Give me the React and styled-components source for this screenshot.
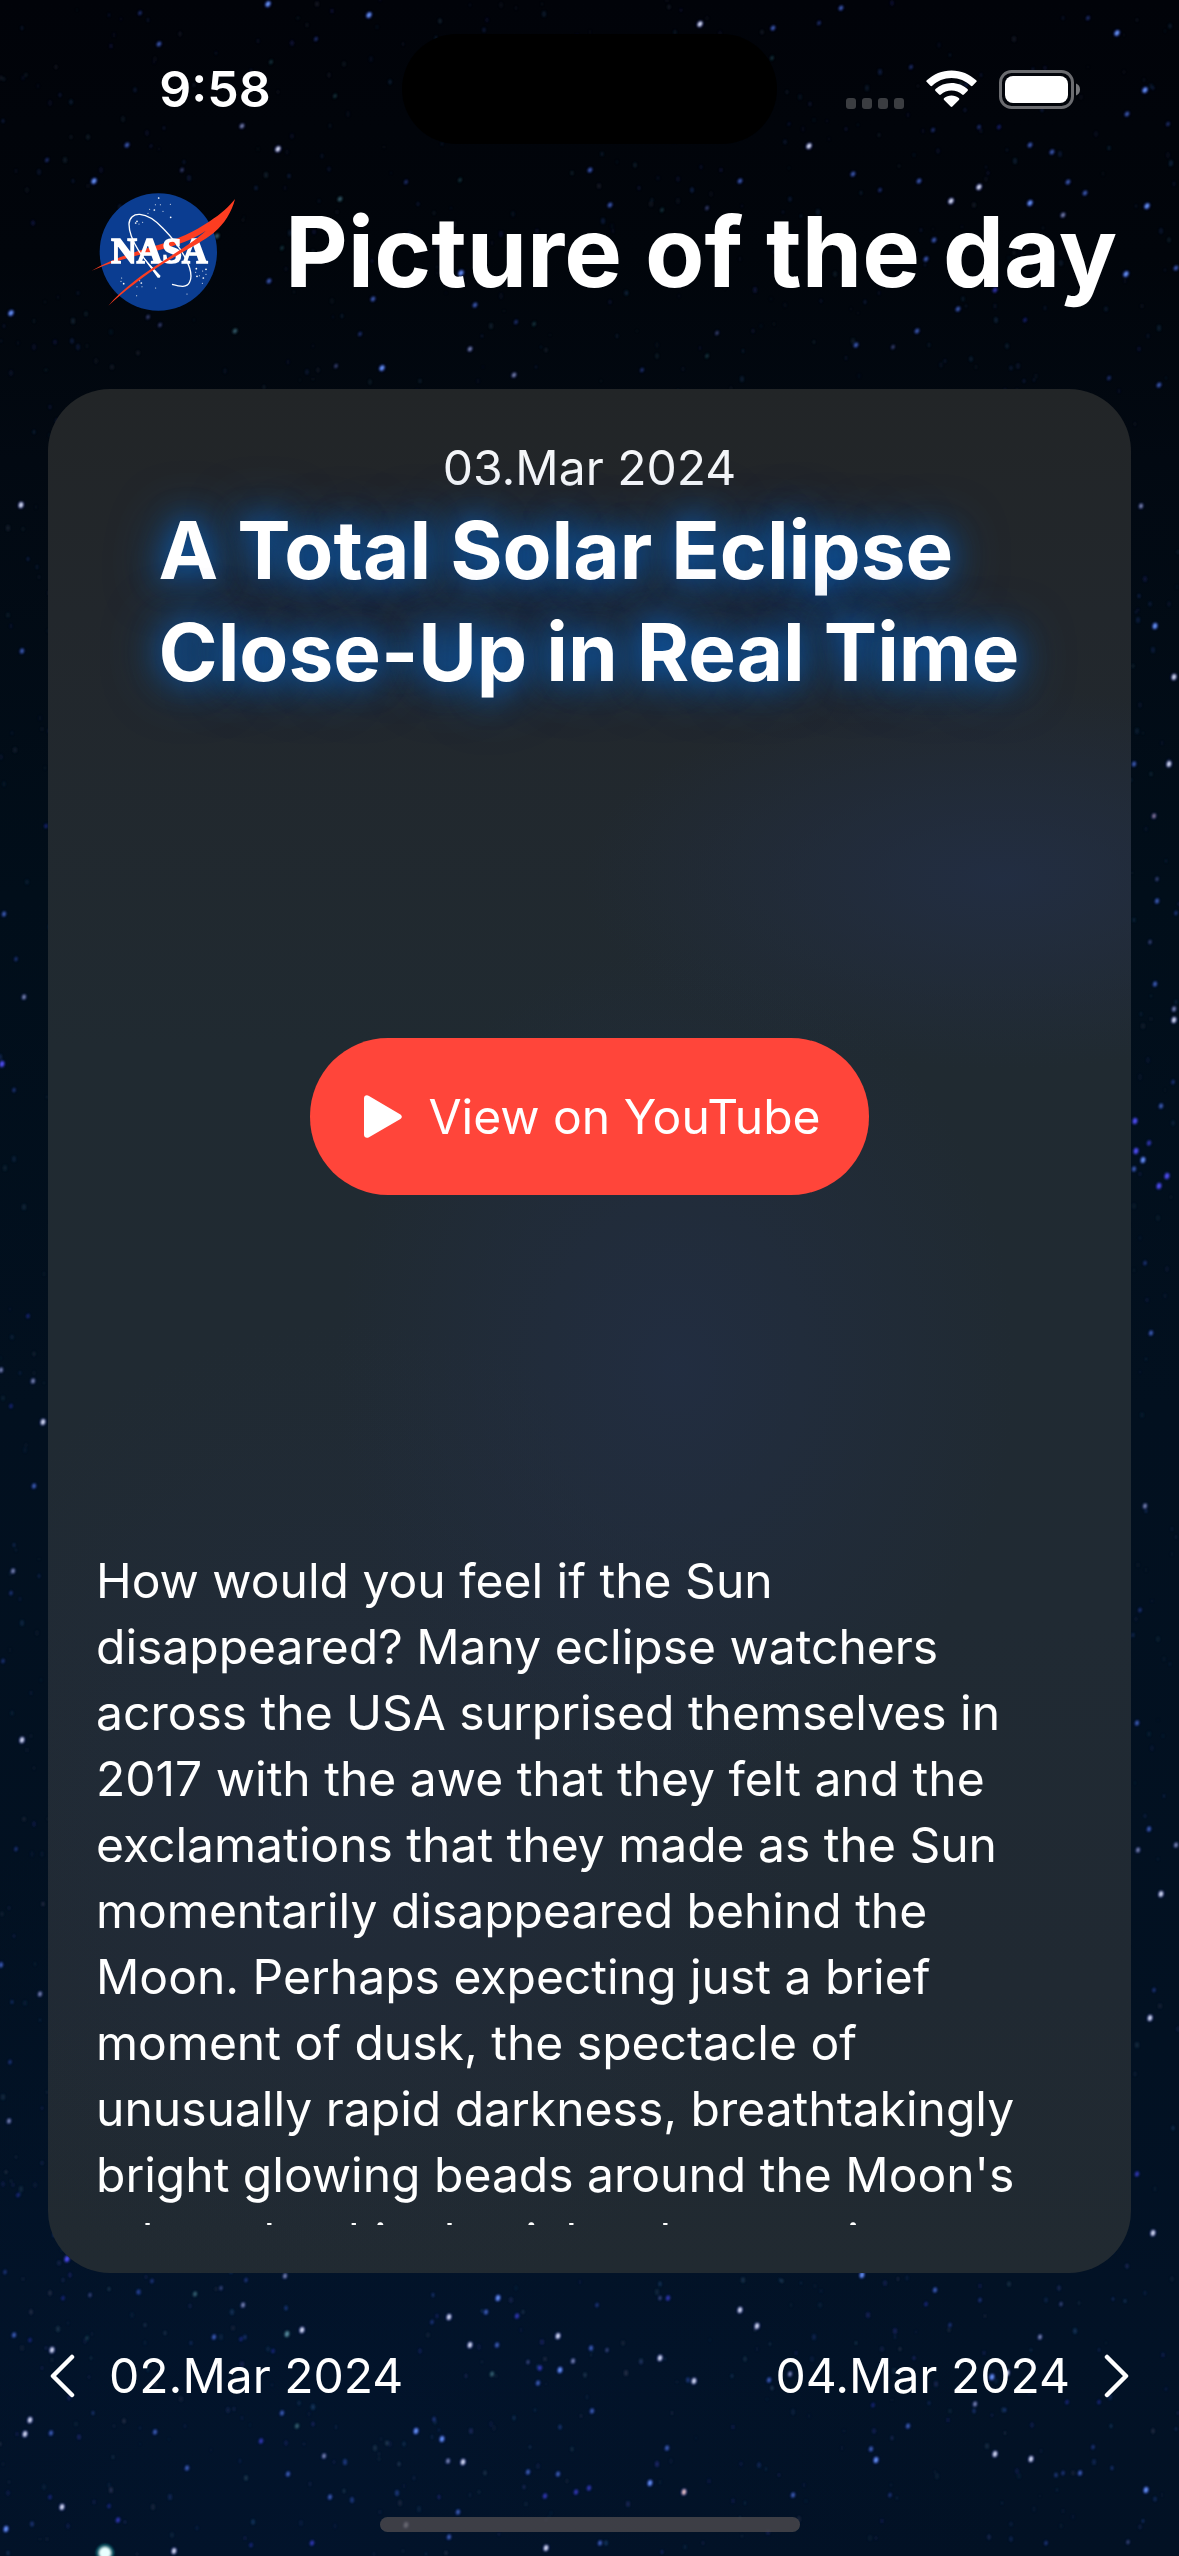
import React from "react";
import styled, { createGlobalStyle } from "styled-components";

const GlobalStyle = createGlobalStyle`
  * { box-sizing: border-box; }
  html, body { margin: 0; padding: 0; background: #020a14; }
  body, button { font-family: Inter, "Liberation Sans", sans-serif; color: #fff; }
`;

const Page = styled.div`
  position: relative;
  isolation: isolate;
  display: flex;
  flex-direction: column;
  min-height: 100vh;
  overflow: hidden;
  background:
    radial-gradient(ellipse 60% 30% at 25% 100%, rgba(2, 24, 56, 0.35), transparent),
    linear-gradient(180deg, #010309 0%, #01050b 10%, #020912 18%, #010e1a 35%, #02101f 55%, #021122 80%, #021226 92%, #021124 100%);
`;

const Sky = styled.svg`
  position: absolute;
  inset: 0;
  z-index: -1;
  width: 100%;
  height: 100%;
`;

const StatusBar = styled.div`
  display: grid;
  grid-template-columns: 1fr 375px 1fr;
  align-items: center;
  height: 178px;
`;

const Clock = styled.time`
  padding-left: 28px;
  text-align: center;
  font-size: 50px;
  line-height: 60px;
  font-weight: 600;
`;

const Island = styled.div`
  height: 110px;
  border-radius: 55px;
  background: #000;
`;

const Indicators = styled.div`
  display: flex;
  align-items: center;
  justify-content: center;
  gap: 22px;
  padding-right: 30px;
`;

const Dots = styled.svg`
  margin-top: 28px;
`;

const Header = styled.header`
  display: flex;
  align-items: center;
  gap: 48px;
  height: 148px;
  padding-left: 91px;
`;

const PageTitle = styled.h1`
  margin: 0;
  font-size: 97px;
  line-height: 120px;
  font-weight: 700;
  white-space: nowrap;
`;

const Card = styled.main`
  flex: 1;
  display: flex;
  flex-direction: column;
  margin: 63px 48px 0;
  padding: 48px;
  border-radius: 62px;
  background:
    radial-gradient(ellipse 420px 190px at 88% 26%, rgba(34, 46, 68, 0.9), transparent),
    radial-gradient(ellipse 340px 420px at 58% 52%, rgba(34, 46, 68, 0.8), transparent),
    radial-gradient(ellipse 460px 500px at 28% 76%, rgba(34, 44, 60, 0.7), transparent),
    linear-gradient(180deg, #222527 0%, #22272c 12%, #202a31 35%, #202a33 65%, #202932 85%, #212a31 100%);
`;

const EntryDate = styled.time`
  text-align: center;
  font-size: 48px;
  line-height: 62px;
  color: #f4f6f8;
`;

const EntryTitle = styled.h2`
  align-self: center;
  max-width: 862px;
  margin: 0;
  font-size: 80px;
  line-height: 102px;
  font-weight: 700;
  text-shadow: 0 0 30px #0a5cb4, 0 0 56px rgba(10, 92, 180, 0.9);
`;

const Media = styled.section`
  flex: 1;
  display: flex;
  align-items: center;
  justify-content: center;
  margin-bottom: 18px;
`;

const VideoButton = styled.button`
  display: flex;
  align-items: center;
  gap: 26px;
  height: 157px;
  padding: 0 48px 0 54px;
  border: 0;
  border-radius: 78px;
  background: #ff453a;
  font-size: 48px;
  line-height: 62px;
`;

const Explanation = styled.p`
  height: 677px;
  margin: 0;
  overflow: hidden;
  font-size: 48px;
  line-height: 66px;
`;

const DayNav = styled.nav`
  display: flex;
  align-items: center;
  justify-content: space-between;
  height: 206px;
  padding: 0 50px;
`;

const DayButton = styled.button`
  display: flex;
  align-items: center;
  gap: 34px;
  padding: 0;
  border: 0;
  background: none;
  font-size: 48px;
  line-height: 66px;
`;

const HomeArea = styled.div`
  display: flex;
  align-items: flex-end;
  justify-content: center;
  height: 77px;
  padding-bottom: 24px;
`;

const HomeBar = styled.div`
  width: 420px;
  height: 15px;
  border-radius: 8px;
  background: rgba(76, 74, 78, 0.8);
`;

/* x, y, brightness 1-4, tint */
const BRIGHT_STARS = [
  [268, 4, 4, "b"], [369, 15, 4, "b"], [140, 13, 2, "b"], [159, 44, 3, "b"], [298, 18, 1, "t"], [316, 39, 2, "b"],
  [335, 96, 2, "t"], [271, 62, 2, "t"], [242, 126, 3, "w"], [278, 149, 4, "w"], [127, 145, 3, "b"], [151, 146, 1, "w"],
  [94, 181, 4, "b"], [47, 160, 2, "b"], [182, 170, 2, "w"], [11, 313, 4, "b"], [235, 331, 3, "t"], [269, 281, 3, "b"],
  [373, 299, 3, "b"], [475, 305, 3, "b"], [461, 273, 4, "b"], [340, 199, 3, "t"], [406, 182, 2, "b"], [460, 180, 2, "t"],
  [590, 170, 3, "b"], [470, 349, 3, "w"], [382, 368, 4, "b"], [514, 375, 3, "w"], [336, 366, 2, "w"], [360, 334, 2, "b"],
  [534, 324, 2, "t"], [516, 322, 2, "b"], [148, 317, 2, "w"], [160, 325, 2, "w"], [46, 370, 1, "t"], [217, 236, 3, "t"],
  [282, 248, 2, "t"], [700, 24, 4, "w"], [773, 28, 3, "b"], [841, 8, 3, "b"], [819, 23, 2, "b"], [772, 58, 2, "t"],
  [1088, 18, 2, "b"], [1117, 33, 4, "b"], [1145, 90, 4, "b"], [1127, 114, 3, "b"], [1168, 124, 2, "b"], [911, 67, 2, "b"],
  [809, 146, 4, "w"], [789, 124, 1, "b"], [933, 130, 2, "b"], [979, 127, 2, "b"], [999, 127, 2, "v"], [1030, 145, 3, "b"],
  [1052, 152, 3, "b"], [853, 174, 3, "b"], [919, 181, 3, "b"], [979, 187, 4, "w"], [951, 201, 4, "w"], [1030, 203, 4, "b"],
  [1068, 182, 3, "b"], [1085, 193, 3, "b"], [1063, 215, 3, "w"], [1147, 206, 4, "b"], [1126, 274, 4, "b"], [1176, 268, 3, "b"],
  [740, 181, 3, "b"], [610, 205, 3, "b"], [662, 210, 2, "t"], [707, 208, 2, "w"], [880, 190, 2, "b"], [934, 240, 3, "b"],
  [926, 259, 3, "b"], [995, 290, 3, "v"], [958, 309, 3, "b"], [1025, 320, 2, "v"], [917, 331, 3, "b"], [856, 345, 3, "b"],
  [893, 347, 2, "w"], [707, 356, 2, "t"], [642, 370, 2, "b"], [717, 333, 2, "w"], [1109, 378, 2, "b"],
  [21, 505, 4, "w"], [22, 651, 3, "b"], [46, 826, 2, "v"], [4, 914, 3, "b"], [16, 959, 2, "b"], [24, 997, 3, "w"],
  [2, 1064, 4, "v"], [14, 1090, 2, "b"], [28, 1316, 2, "v"], [1, 1370, 3, "w"], [33, 1381, 3, "w"], [11, 1406, 2, "v"],
  [43, 1422, 4, "w"], [34, 1486, 3, "b"], [13, 1571, 3, "w"], [11, 1593, 2, "b"], [3, 1661, 2, "b"], [22, 1740, 4, "w"],
  [40, 1994, 3, "w"], [9, 2121, 3, "w"], [18, 2195, 2, "v"], [1, 1965, 3, "b"], [16, 1849, 2, "b"], [10, 2062, 2, "b"],
  [1159, 385, 3, "b"], [1141, 506, 3, "w"], [1155, 626, 4, "b"], [1174, 677, 4, "w"], [1134, 764, 3, "b"], [1169, 764, 4, "w"],
  [1154, 816, 3, "r"], [1157, 879, 2, "w"], [1157, 901, 3, "b"], [1176, 913, 2, "b"], [1150, 942, 2, "w"], [1155, 984, 3, "b"],
  [1174, 1009, 3, "w"], [1174, 1020, 4, "w"], [1173, 1082, 2, "b"], [1161, 1106, 3, "b"], [1135, 1121, 4, "v"],
  [1149, 1143, 3, "v"], [1136, 1151, 4, "v"], [1143, 1160, 4, "b"], [1134, 1169, 3, "b"], [1167, 1176, 4, "v"],
  [1159, 1186, 4, "v"], [1145, 1263, 2, "b"], [1151, 1333, 3, "b"], [1145, 1506, 3, "w"], [1140, 1610, 2, "b"],
  [1137, 1723, 3, "b"], [1149, 1829, 3, "b"], [1138, 1850, 3, "w"], [1176, 1845, 3, "w"], [1161, 1894, 4, "w"],
  [1154, 1990, 2, "b"], [1150, 2018, 4, "w"], [1137, 2174, 3, "v"], [1153, 2233, 4, "w"],
  [67, 2259, 4, "v"], [5, 2272, 2, "b"], [285, 2276, 3, "w"], [152, 2281, 2, "b"], [195, 2294, 3, "t"], [221, 2288, 2, "w"],
  [138, 2292, 2, "b"], [246, 2280, 2, "b"], [243, 2305, 3, "w"], [90, 2295, 2, "w"], [63, 2298, 2, "v"], [14, 2335, 3, "b"],
  [30, 2340, 2, "v"], [52, 2350, 4, "w"], [87, 2338, 2, "t"], [214, 2337, 3, "b"], [241, 2339, 2, "v"], [287, 2334, 4, "t"],
  [302, 2330, 4, "w"], [273, 2351, 2, "v"], [470, 2345, 4, "w"], [449, 2317, 4, "w"], [498, 2298, 4, "b"], [486, 2312, 3, "b"],
  [432, 2322, 2, "b"], [517, 2316, 3, "v"], [558, 2336, 4, "w"], [597, 2305, 2, "b"], [660, 2298, 2, "w"], [668, 2298, 3, "v"],
  [740, 2310, 4, "w"], [757, 2326, 4, "w"], [660, 2358, 4, "w"], [694, 2381, 4, "w"], [591, 2348, 3, "b"], [607, 2350, 2, "w"],
  [573, 2361, 3, "w"], [560, 2370, 4, "b"], [540, 2368, 3, "v"], [528, 2362, 2, "w"], [538, 2383, 3, "b"], [492, 2374, 3, "t"],
  [497, 2345, 3, "b"], [862, 2275, 4, "b"], [935, 2290, 3, "b"], [926, 2304, 2, "v"], [950, 2325, 2, "b"], [1040, 2337, 3, "w"],
  [980, 2300, 2, "b"], [1061, 2304, 2, "w"], [769, 2380, 3, "b"], [592, 2411, 3, "b"], [282, 2413, 3, "b"],
  [30, 2420, 4, "w"], [25, 2434, 4, "w"], [51, 2433, 3, "b"], [155, 2432, 3, "b"], [261, 2441, 3, "v"], [297, 2426, 3, "t"],
  [416, 2431, 4, "b"], [442, 2439, 4, "b"], [448, 2461, 3, "w"], [463, 2462, 4, "w"], [434, 2419, 2, "b"], [324, 2456, 3, "w"],
  [187, 2468, 3, "b"], [288, 2474, 3, "b"], [528, 2472, 3, "b"], [558, 2474, 3, "b"], [667, 2448, 3, "b"], [650, 2483, 4, "b"],
  [684, 2492, 4, "r"], [589, 2488, 3, "v"], [576, 2492, 3, "v"], [545, 2496, 3, "v"], [330, 2497, 3, "b"], [50, 2497, 2, "v"],
  [62, 2507, 4, "w"], [109, 2506, 2, "v"], [118, 2520, 3, "v"], [6, 2529, 4, "b"], [458, 2512, 3, "b"], [406, 2525, 4, "w"],
  [449, 2537, 3, "b"], [546, 2548, 4, "w"], [600, 2543, 3, "b"], [174, 2551, 4, "w"], [312, 2543, 3, "v"], [251, 2545, 2, "v"],
  [908, 2426, 3, "b"], [871, 2449, 3, "b"], [876, 2460, 4, "b"], [995, 2454, 4, "w"], [1031, 2459, 4, "w"], [1093, 2447, 2, "b"],
  [1080, 2473, 3, "b"], [1063, 2473, 2, "b"], [1146, 2490, 4, "b"], [793, 2495, 3, "b"], [890, 2495, 2, "b"], [1128, 2542, 2, "w"],
  [1046, 2543, 2, "b"], [975, 2404, 3, "w"], [1007, 2373, 4, "w"], [992, 2377, 4, "b"], [790, 2374, 3, "w"], [1099, 2402, 2, "v"],
  [1067, 2402, 2, "v"], [1166, 2389, 1, "b"], [873, 2405, 2, "v"],
];

const TINTS = { w: "#e9eeff", b: "#6f9dff", v: "#5a52ff", t: "#5f93a8", r: "#ffd2cc" };
const SKY_WIDTH = 1179;
const SKY_HEIGHT = 2556;

function scatterStars(count) {
  let seed = 7321;
  const next = () => {
    seed = (seed * 16807) % 2147483647;
    return seed / 2147483647;
  };
  const tints = ["#2c4fae", "#27336f", "#30506a", "#3a3f58", "#2a2f8c", "#1f4a7a"];
  return Array.from({ length: count }, () => {
    const x = Math.round(next() * SKY_WIDTH);
    const y = Math.round(next() * SKY_HEIGHT);
    return {
      x,
      y,
      r: 1.2 + next() * 1.4,
      tint: tints[Math.floor(next() * tints.length)],
      opacity: (0.1 + next() * 0.4) * (y > 1900 ? 1.2 : 0.7),
    };
  });
}

const FAINT_STARS = scatterStars(2600);

function StarField() {
  return (
    <Sky viewBox={`0 0 ${SKY_WIDTH} ${SKY_HEIGHT}`} preserveAspectRatio="xMidYMid slice" aria-hidden="true">
      <defs>
        <filter id="soft" x="-5%" y="-5%" width="110%" height="110%">
          <feGaussianBlur stdDeviation="0.8" />
        </filter>
      </defs>
      <g filter="url(#soft)">
        {FAINT_STARS.map((s, i) => (
          <ellipse key={i} cx={s.x} cy={s.y} rx={s.r * 0.8} ry={s.r * 1.2} fill={s.tint} opacity={s.opacity} />
        ))}
        {BRIGHT_STARS.map(([x, y, level, tint], i) => (
          <g key={i} transform={`translate(${x} ${y}) rotate(${y < 400 ? 35 : 12})`}>
            <ellipse rx={level * 0.5 + 1} ry={level * 0.5 + 1.6} fill={tint === "t" ? "#17424f" : "#1c2fb0"} opacity={level * 0.16} />
            <ellipse rx={level * 0.3 + 0.6} ry={level * 0.45 + 0.9} fill={TINTS[tint]} opacity={level * level * 0.06} />
          </g>
        ))}
        <circle cx="105" cy="2553" r="9" fill="#1c8c94" opacity="0.7" />
        <circle cx="105" cy="2553" r="6" fill="#e8ffff" />
      </g>
    </Sky>
  );
}

const LOGO_STARS = [
  [235, 52], [225, 72], [240, 72], [222, 88], [270, 71], [248, 92], [271, 110], [208, 86], [203, 98], [170, 122], [187, 125],
  [176, 130], [166, 127], [124, 292], [122, 302], [130, 309], [170, 318], [178, 300], [183, 307], [169, 345], [226, 322],
  [348, 264], [346, 275], [367, 271], [377, 266], [377, 281], [357, 285], [369, 292], [366, 308], [320, 340], [350, 287], [185, 318],
];

function NasaLogo() {
  return (
    <svg width="146" height="120" viewBox="32 34 438 360" role="img" aria-label="NASA">
      <circle cx="234" cy="214" r="176" fill="#0b3d91" />
      {LOGO_STARS.map(([x, y], i) => (
        <circle key={i} cx={x} cy={y} r={i % 3 ? 1.6 : 2.6} fill="#fff" />
      ))}
      <path
        d="M34 270 C90 238 150 217 215 198 C295 176 345 150 386 123 C425 98 446 78 464 55 C455 92 432 130 402 155 L366 178 L376 151 C325 186 260 203 200 217 C140 231 85 248 34 270Z"
        fill="#fc3d21"
      />
      <path
        d="M238 290 C190 235 146 180 146 130 C148 92 196 86 250 145 C302 198 345 270 328 304 C320 322 300 318 275 311"
        fill="none"
        stroke="#fff"
        strokeWidth="4"
      />
      <path d="M183 222 L232 291 Q238 293 241 286 L205 247Z" fill="#fff" />
      <text x="237" y="247" textAnchor="middle" fill="#fff" stroke="#fff" strokeWidth="5" fontFamily="Liberation Serif, serif" fontWeight="700" fontSize="106">
        NASA
      </text>
      <path
        d="M84 375 C125 325 195 274 250 240 C305 204 345 180 376 151 L402 155 C365 185 310 212 253 246 C195 282 128 334 84 375Z"
        fill="#fc3d21"
      />
    </svg>
  );
}

function SignalDots() {
  return (
    <Dots width="58" height="12" viewBox="0 0 58 12" aria-hidden="true">
      {[0, 16, 32, 48].map((x) => (
        <rect key={x} x={x} y="1" width="10" height="11" rx="3" fill="#3b3d41" />
      ))}
    </Dots>
  );
}

function WifiIcon() {
  return (
    <svg width="51" height="38" viewBox="0 0 51 38" role="img" aria-label="Wi-Fi">
      <path
        fill="#fff"
        d="M25.500 0.500C35 0.500 43.600 4.200 50.200 10.300a1.200 1.200 0 0 1 0 1.800L46.600 15.700a1.300 1.300 0 0 1-1.800 0C39.700 11 33 8 25.500 8S11.300 11 6.200 15.700a1.300 1.300 0 0 1-1.800 0L.8 12.100a1.200 1.200 0 0 1 0-1.800C7.400 4.200 16 .5 25.500 .5Z"
      />
      <path
        fill="#fff"
        d="M25.500 13c6.100 0 11.700 2.300 16 6.100a1.300 1.300 0 0 1 0 1.900l-3.600 3.600a1.300 1.300 0 0 1-1.800 0C33.300 22.100 29.600 20.600 25.500 20.600s-7.800 1.500-10.600 4a1.300 1.300 0 0 1-1.800 0L9.500 21a1.300 1.300 0 0 1 0-1.900c4.300-3.800 9.900-6.100 16-6.100Z"
      />
      <path
        fill="#fff"
        d="M25.500 25.500c2.800 0 5.300 1 7.300 2.600a1.300 1.300 0 0 1 .1 2L26.400 36.600a1.300 1.300 0 0 1-1.800 0L18.100 30.100a1.300 1.300 0 0 1 .1-2c2-1.600 4.500-2.600 7.300-2.600Z"
      />
    </svg>
  );
}

function BatteryIcon() {
  return (
    <svg width="82" height="39" viewBox="0 0 82 39" role="img" aria-label="Battery">
      <rect x="1.500" y="1.500" width="72" height="36" rx="11" fill="none" stroke="#6b6c70" strokeWidth="3" />
      <rect x="6" y="6" width="63" height="27" rx="8" fill="#fff" />
      <path d="M77 13.500 a6.500 6.500 0 0 1 0 12Z" fill="#77787c" />
    </svg>
  );
}

function PlayIcon() {
  return (
    <svg width="38" height="43" viewBox="0 0 38 43" aria-hidden="true">
      <path d="M0 3.500C0 .6 2.600-.5 5 1L36 19.300c2.400 1.500 2.400 3.500 0 5L5 42.200c-2.400 1.400-5 .2-5-2.500Z" fill="#fff" />
    </svg>
  );
}

function Chevron({ direction }) {
  const points = direction === "left" ? "22,3 3,22 22,41" : "3,3 22,22 3,41";
  return (
    <svg width="25" height="44" viewBox="0 0 25 44" aria-hidden="true">
      <polyline points={points} fill="none" stroke="#fff" strokeWidth="4.500" strokeLinecap="round" strokeLinejoin="round" />
    </svg>
  );
}

export default function App() {
  return (
    <>
      <GlobalStyle />
      <Page>
        <StarField />
        <StatusBar>
          <Clock>9:58</Clock>
          <Island />
          <Indicators>
            <SignalDots />
            <WifiIcon />
            <BatteryIcon />
          </Indicators>
        </StatusBar>
        <Header>
          <NasaLogo />
          <PageTitle>Picture of the day</PageTitle>
        </Header>
        <Card>
          <EntryDate dateTime="2024-03-03">03.Mar 2024</EntryDate>
          <EntryTitle>A Total Solar Eclipse Close-Up in Real Time</EntryTitle>
          <Media>
            <VideoButton type="button">
              <PlayIcon />
              View on YouTube
            </VideoButton>
          </Media>
          <Explanation>
            How would you feel if the Sun disappeared? Many eclipse watchers across the USA surprised themselves in 2017
            with the awe that they felt and the exclamations that they made as the Sun momentarily disappeared behind the
            Moon. Perhaps expecting just a brief moment of dusk, the spectacle of unusually rapid darkness,
            breathtakingly bright glowing beads around the Moon's edge, shockingly pink solar prominences,
          </Explanation>
        </Card>
        <DayNav aria-label="Day">
          <DayButton type="button">
            <Chevron direction="left" />
            02.Mar 2024
          </DayButton>
          <DayButton type="button">
            04.Mar 2024
            <Chevron direction="right" />
          </DayButton>
        </DayNav>
        <HomeArea>
          <HomeBar />
        </HomeArea>
      </Page>
    </>
  );
}
